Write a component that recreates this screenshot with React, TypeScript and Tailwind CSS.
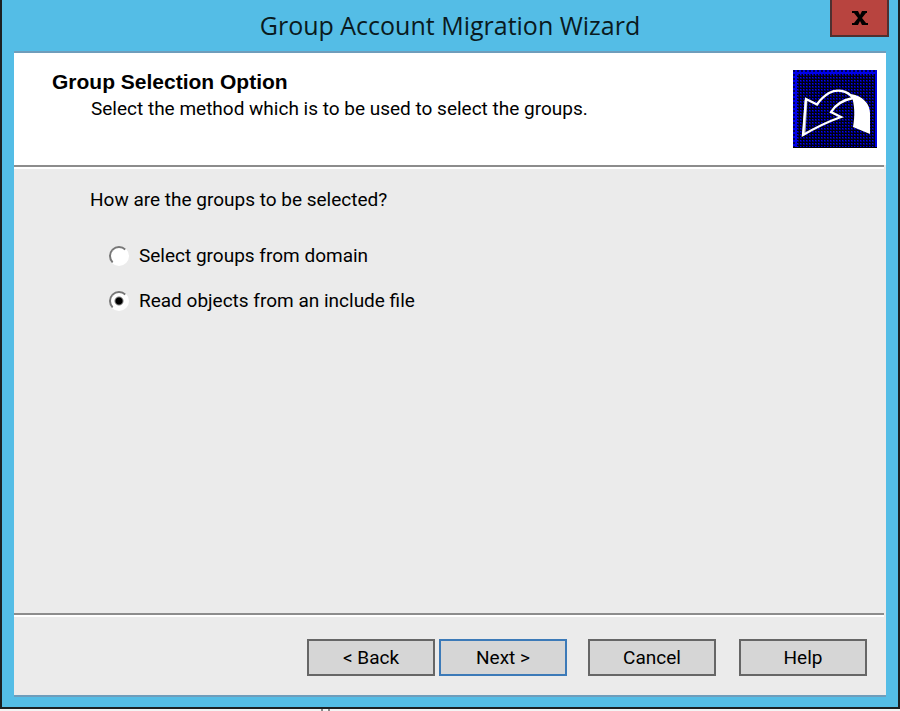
import React, { useState } from 'react';

const buttonClass =
  'h-[37px] w-32 border-2 bg-[#d6d6d6] text-[19px] leading-6 text-black';

const MigrationIcon: React.FC = () => (
  <svg width="84" height="78" viewBox="0 0 84 78" aria-hidden="true">
    <defs>
      <pattern id="dots" width="3" height="3" patternUnits="userSpaceOnUse">
        <rect width="3" height="3" fill="#000010" />
        <rect x="1" y="1" width="2" height="2" fill="#000078" />
        <rect x="1" y="1" width="1" height="1" fill="#0000ff" />
      </pattern>
      <pattern id="edge" width="4" height="4" patternUnits="userSpaceOnUse">
        <rect width="4" height="4" fill="#0000e8" />
        <rect width="2" height="2" fill="#000050" />
      </pattern>
    </defs>
    <rect width="84" height="78" fill="url(#dots)" />
    <path d="M0 0H84V78H82V4H4V78H0Z" fill="url(#edge)" />
    <path d="M0 77.500H84" stroke="#000" />
    <path d="M13 30L11 64" stroke="#aaa" strokeWidth="3" />
    <path
      d="M13 29L10 65C22 58 34 52 48 47L38 42C43 34 50 30 60 28C54 20 44 19 36 23C31 26 27 30 24 34.500Z"
      fill="none"
      stroke="#fff"
      strokeWidth="2.300"
    />
    <path d="M58 24C70 26 77 34 77 43V64L60 57C62 46 62 35 58 24Z" fill="#fff" />
  </svg>
);

const Title: React.FC = () => (
  <header className="relative flex h-[51px] items-center justify-center pb-[2px]">
    <h1 className="font-['Open_Sans',sans-serif] text-[25px] leading-8 text-[#0a1a20]">
      Group Account Migration Wizard
    </h1>
    <button
      aria-label="Close"
      className="absolute top-0 -right-[3px] flex h-[37px] w-[59px] items-center justify-center border-2 border-t-0 border-[#4f3030] bg-[#b8443f]"
    >
      <svg width="16" height="14" viewBox="0 0 16 14">
        <path d="M0 0H6L8 4L10 0H15V2H14L10 7L14 12H16V14H10L8 10L6 14H0V12H2L6 7L2 2H0Z" />
      </svg>
    </button>
  </header>
);

const Divider: React.FC = () => (
  <hr className="mr-[2px] border-t-2 border-b-2 border-t-[#8c8c8c] border-b-white" />
);

const App: React.FC = () => {
  const [method, setMethod] = useState('file');
  const options = [
    { id: 'domain', label: 'Select groups from domain' },
    { id: 'file', label: 'Read objects from an include file' },
  ];

  return (
    <div className="flex h-screen flex-col bg-[#f4f4f4] font-[Roboto,sans-serif] text-[19px] leading-6 text-black">
      <div className="flex grow flex-col border-2 border-t-0 border-[#1c2022] bg-[#54bde6] px-3 pb-[10px]">
        <Title />
        <main className="flex grow flex-col border-t-2 border-b-2 border-[#6f9dbb] bg-[#ebebeb]">
          <div className="flex h-28 items-start justify-between bg-white pt-[17px] pr-[9px] pl-[38px]">
            <div>
              <h2 className="font-['Liberation_Sans',sans-serif] text-[21px] font-bold">
                Group Selection Option
              </h2>
              <p className="pt-[3px] pl-[39px]">
                Select the method which is to be used to select the groups.
              </p>
            </div>
            <MigrationIcon />
          </div>
          <Divider />
          <fieldset className="grow pt-[19px] pl-[76px]">
            <legend className="float-left w-full">How are the groups to be selected?</legend>
            <div className="clear-both flex flex-col gap-[21px] pt-8 pl-[19px]">
              {options.map((option) => (
                <label key={option.id} className="flex items-center gap-[10px]">
                  <input
                    type="radio"
                    name="method"
                    className="size-5 appearance-none rounded-full border-2 border-[#777] border-r-white border-b-white bg-white checked:bg-[radial-gradient(circle,#000_3px,#fff_5px)]"
                    checked={method === option.id}
                    onChange={() => setMethod(option.id)}
                  />
                  {option.label}
                </label>
              ))}
            </div>
          </fieldset>
          <Divider />
          <footer className="flex justify-end pt-[22px] pr-[19px] pb-[19px]">
            <button className={`${buttonClass} mr-1 border-[#666]`}>&lt; Back</button>
            <button className={`${buttonClass} mr-[21px] border-[#3c7ab8]`}>Next &gt;</button>
            <button className={`${buttonClass} mr-[23px] border-[#666]`}>Cancel</button>
            <button className={`${buttonClass} border-[#666]`}>Help</button>
          </footer>
        </main>
      </div>
      <div className="flex h-[2px] gap-[5px] pl-[321px]">
        <span className="w-[2px] bg-[#888]" />
        <span className="w-[2px] bg-[#888]" />
      </div>
    </div>
  );
};

export default App;
